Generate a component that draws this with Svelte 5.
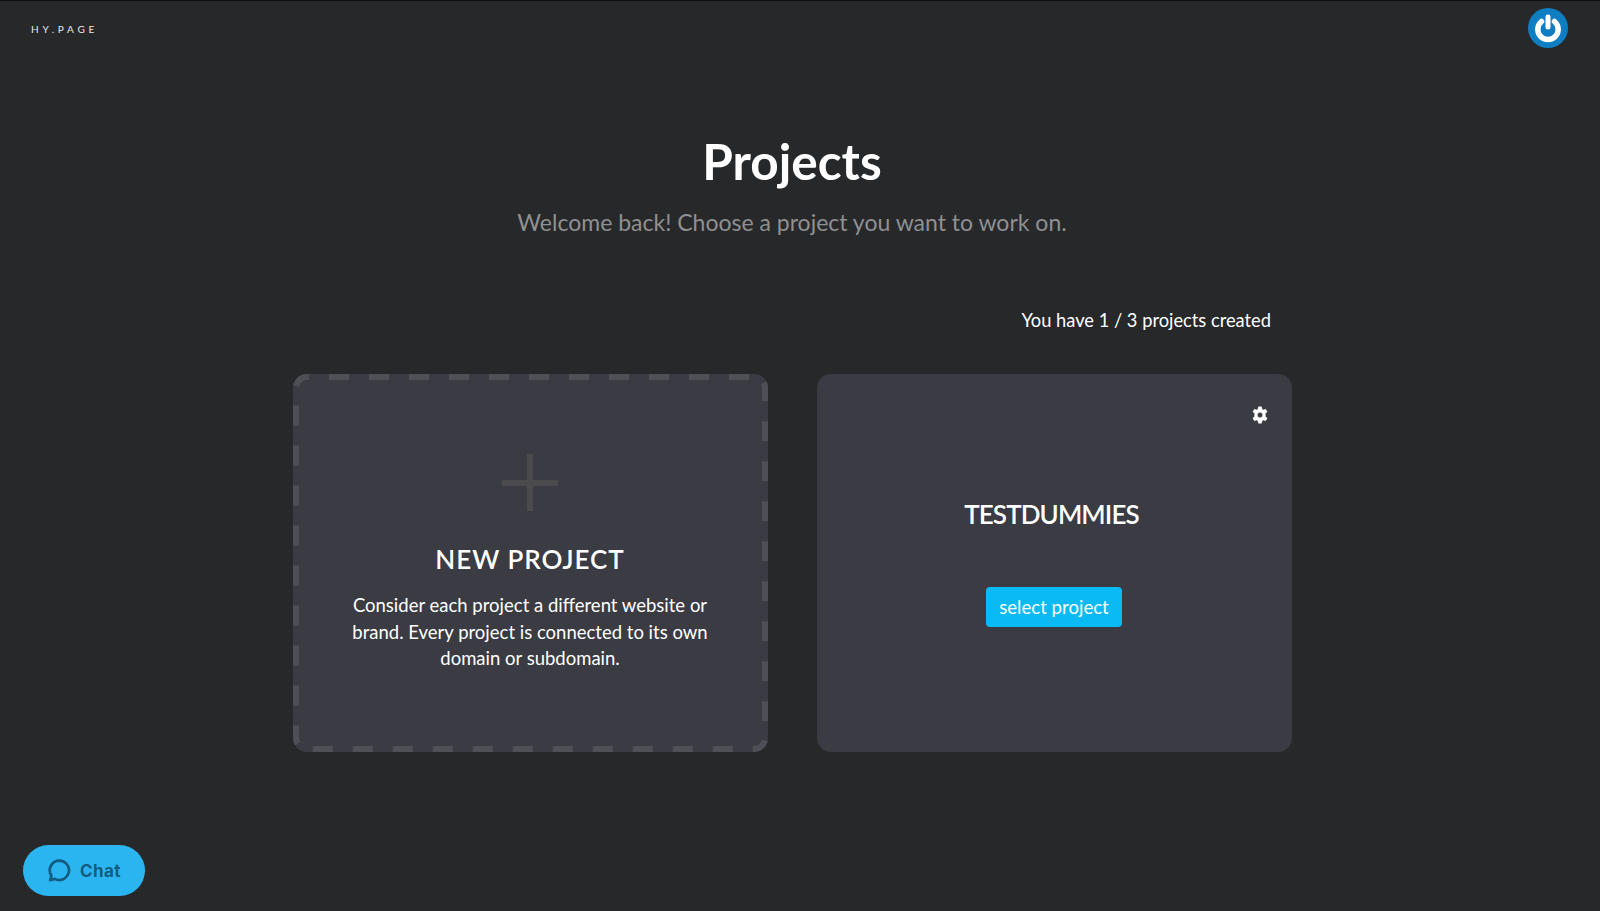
<script>
	const limit = 3;
	let projects = ['TESTDUMMIES'];
</script>

<svelte:head>
	<title>Projects</title>
</svelte:head>

<div class="page">
	<header class="topbar">
		<span class="logo">HY.PAGE</span>
		<svg class="avatar" viewBox="0 0 40 40" width="40" height="40">
			<circle cx="20" cy="20" r="20" fill="#0f7dc2" />
			<path d="M13.5 12.5 A10.2 10.2 0 1 0 26.5 12.5" fill="none" stroke="#fff" stroke-width="5.5" stroke-linecap="round" transform="translate(0 1)" />
			<path d="M20 9 V19" fill="none" stroke="#fff" stroke-width="5" stroke-linecap="round" />
		</svg>
	</header>

	<main class="content">
		<h1>Projects</h1>
		<p class="subtitle">Welcome back! Choose a project you want to work on.</p>
		<p class="count">You have {projects.length} / {limit} projects created</p>

		<div class="cards">
			<section class="card new">
				<svg class="dashes" viewBox="0 0 475 378" preserveAspectRatio="none">
					<rect x="0" y="0" width="475" height="378" rx="14" fill="none" stroke="#4f5055" stroke-width="12" stroke-dasharray="20 20" stroke-dashoffset="18" />
				</svg>
				<div class="plus"></div>
				<h2>NEW PROJECT</h2>
				<p>Consider each project a different website or brand. Every project is connected to its own domain or subdomain.</p>
			</section>

			{#each projects as project}
				<section class="card project">
					<svg class="gear" viewBox="0 0 24 24" width="18" height="18">
						<path fill="#fff" fill-rule="evenodd" d="M10 1 H14 L14.7 4.2 L16.4 5.2 L19.5 4.2 L21.5 7.7 L19.1 9.9 V14.1 L21.5 16.3 L19.5 19.8 L16.4 18.8 L14.7 19.8 L14 23 H10 L9.3 19.8 L7.6 18.8 L4.5 19.8 L2.5 16.3 L4.9 14.1 V9.9 L2.5 7.7 L4.5 4.2 L7.6 5.2 L9.3 4.2 Z M12 8.4 A3.6 3.6 0 1 0 12 15.6 A3.6 3.6 0 1 0 12 8.4 Z" stroke="#fff" stroke-width="0.6" stroke-linejoin="round" />
					</svg>
					<h2>{project}</h2>
					<button>select project</button>
				</section>
			{/each}
		</div>
	</main>

	<button class="chat">
		<svg viewBox="0 0 24 24" width="25" height="25">
			<path d="M12 2.5 A9.3 9.3 0 1 1 7.4 20 L3 21.2 L4.3 17 A9.3 9.3 0 0 1 12 2.5 Z" fill="none" stroke="#125c80" stroke-width="2.6" stroke-linejoin="round" />
		</svg>
		<span>Chat</span>
	</button>
</div>

<style>
	:global(body) {
		background: #27282a;
		font-family: Lato, 'Open Sans', sans-serif;
	}

	.page {
		height: 911px;
		box-sizing: border-box;
		border-top: 1px solid #0e0e0f;
		overflow: hidden;
		color: #fff;
	}

	.topbar {
		display: flex;
		justify-content: space-between;
		align-items: center;
		padding: 7px 32px 0 31px;
	}

	.logo {
		font-size: 10px;
		letter-spacing: 3.8px;
		color: #eaeaea;
		margin-top: 1px;
	}

	.avatar {
		display: block;
	}

	.content {
		width: 1584px;
		display: flex;
		flex-direction: column;
		align-items: center;
	}

	h1 {
		margin: 83px 0 0;
		font-size: 49.5px;
		line-height: 60px;
		font-weight: 700;
	}

	.subtitle {
		margin: 16px 0 0;
		font-size: 23px;
		line-height: 30px;
		color: #8f9092;
	}

	.count {
		align-self: flex-end;
		margin: 70px 313px 0 0;
		font-size: 18.3px;
		line-height: 26px;
	}

	.cards {
		display: flex;
		gap: 49px;
		margin-top: 41px;
	}

	.card {
		position: relative;
		width: 475px;
		height: 378px;
		box-sizing: border-box;
		background: #3a3b43;
		border-radius: 14px;
		overflow: hidden;
		display: flex;
		flex-direction: column;
		align-items: center;
		text-align: center;
	}

	.dashes {
		position: absolute;
		inset: 0;
		width: 100%;
		height: 100%;
	}

	.plus {
		position: relative;
		width: 56px;
		height: 57px;
		margin-top: 80px;
		background:
			linear-gradient(#4b4b4d, #4b4b4d) center / 100% 6px no-repeat,
			linear-gradient(#4b4b4d, #4b4b4d) center / 6px 100% no-repeat;
	}

	h2 {
		margin: 0;
		font-size: 26px;
		line-height: 34px;
		font-weight: 600;
	}

	.new h2 {
		margin-top: 31px;
		letter-spacing: 0.95px;
	}

	.new p {
		margin: 16px 0 0;
		width: 370px;
		font-size: 18.5px;
		line-height: 26.5px;
	}

	.project h2 {
		margin: 123px 5px 0 0;
		letter-spacing: -0.9px;
	}

	.gear {
		position: absolute;
		top: 32px;
		right: 23px;
	}

	.project button {
		margin-top: 56px;
		width: 136px;
		height: 40px;
		border: 0;
		border-radius: 4px;
		background: #0abaf5;
		color: #fff;
		font: 18.6px Lato, sans-serif;
	}

	.chat {
		position: fixed;
		left: 23px;
		bottom: 15px;
		width: 122px;
		height: 51px;
		border: 0;
		border-radius: 26px;
		background: #2bb5f0;
		display: flex;
		align-items: center;
		justify-content: center;
		gap: 8px;
		color: #125c80;
		font: 700 17px Inter, sans-serif;
		letter-spacing: 0.4px;
	}

	.chat svg {
		display: block;
	}
</style>
